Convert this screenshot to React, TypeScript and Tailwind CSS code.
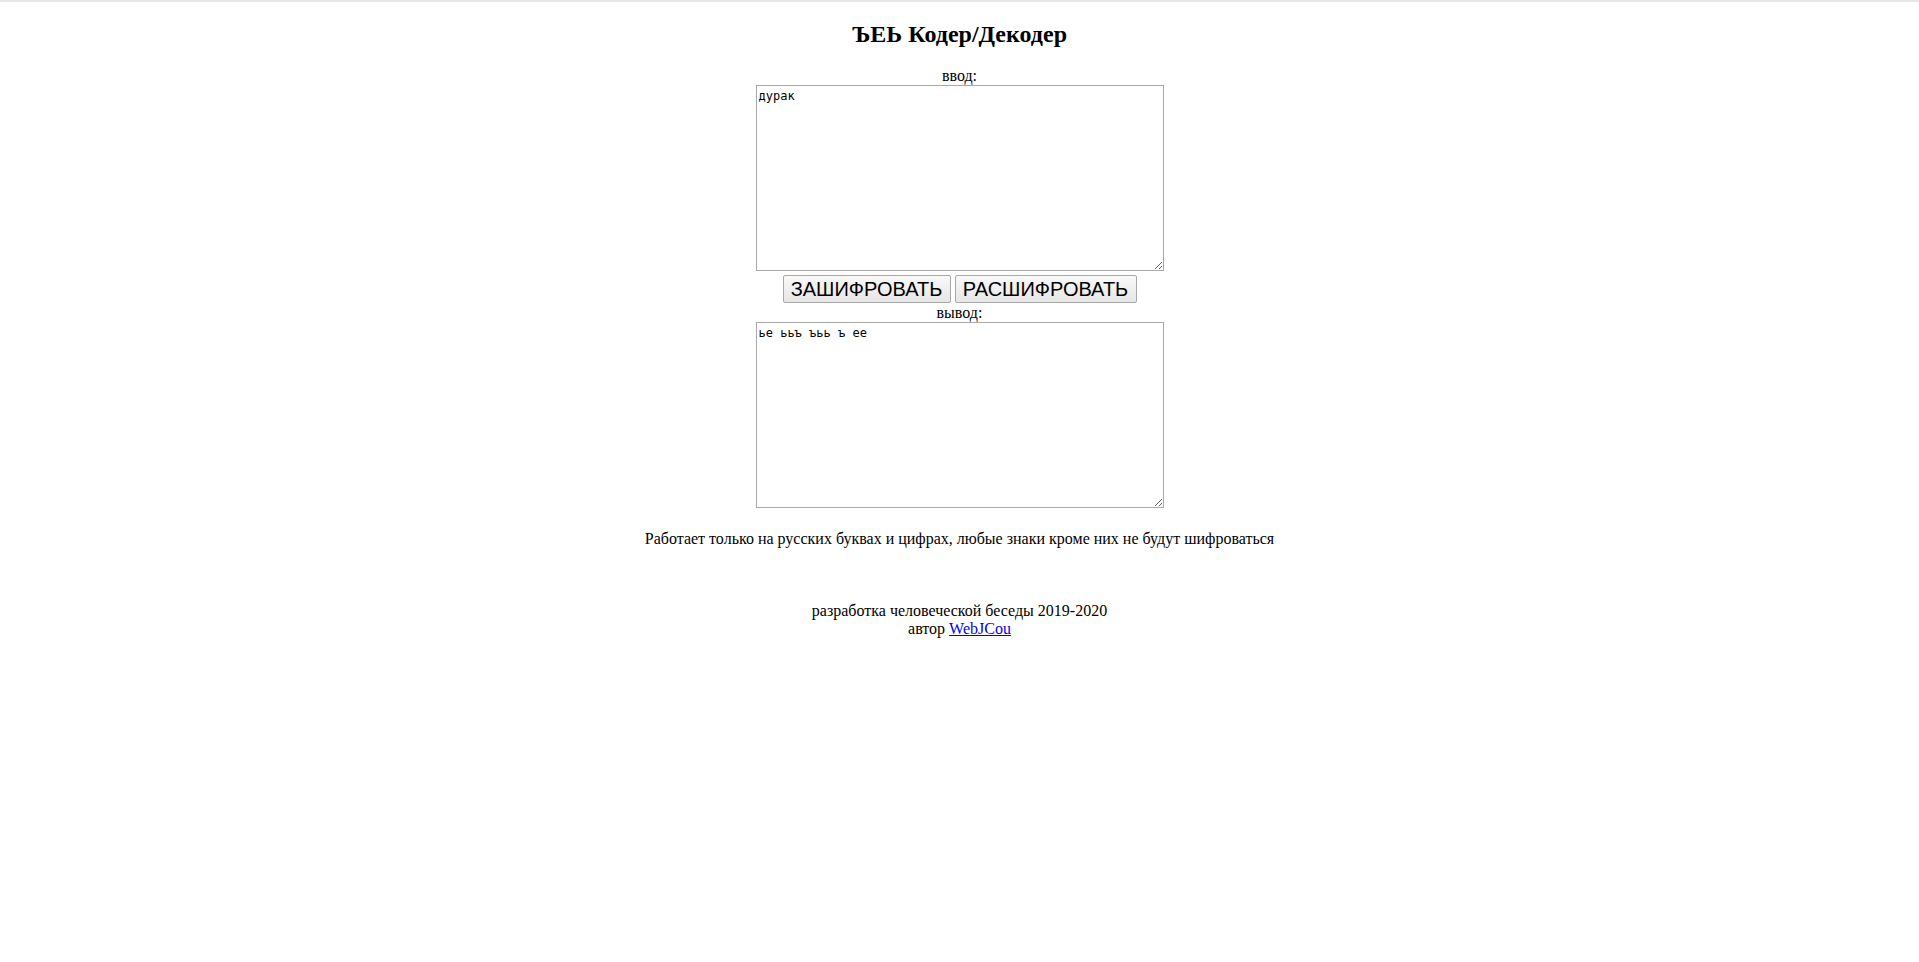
import React from "react";

export default function App() {
  const serif = { fontFamily: '"Liberation Serif", "Times New Roman", serif' };
  return (
    <div className="min-h-[962px] bg-white text-black" style={serif}>
      <div className="h-[2px] bg-[#e6e6e6]" />
      <div className="flex flex-col items-center text-center">
        <h2 className="mt-[18px] text-[24px] font-bold leading-[28px]">ЪЕЬ Кодер/Декодер</h2>
        <div className="mt-[19px] text-[16px] leading-[18px]">ввод:</div>
        <textarea
          className="block h-[186px] w-[408px] resize border border-[#a9a9a9] bg-white px-[2px] pt-[3px] pb-[1px] text-[12px] leading-[15px] text-black outline-none"
          style={{ fontFamily: '"DejaVu Sans Mono", monospace' }}
          defaultValue="дурак"
        />
        <div className="mt-[4px] flex gap-[4px]">
          <button
            className="h-[28px] w-[168px] rounded-[2px] border border-[#a8a8a8] bg-gradient-to-b from-[#f9f9f9] to-[#e6e6e6] text-[20px] leading-[24px] text-black"
            style={{ fontFamily: '"Liberation Sans", Arial, sans-serif' }}
          >
            ЗАШИФРОВАТЬ
          </button>
          <button
            className="h-[28px] w-[182px] rounded-[2px] border border-[#a8a8a8] bg-gradient-to-b from-[#f9f9f9] to-[#e6e6e6] text-[20px] leading-[24px] text-black"
            style={{ fontFamily: '"Liberation Sans", Arial, sans-serif' }}
          >
            РАСШИФРОВАТЬ
          </button>
        </div>
        <div className="mt-[1px] text-[16px] leading-[18px]">вывод:</div>
        <textarea
          className="block h-[186px] w-[408px] resize border border-[#a9a9a9] bg-white px-[2px] pt-[3px] pb-[1px] text-[12px] leading-[15px] text-black outline-none"
          style={{ fontFamily: '"DejaVu Sans Mono", monospace' }}
          defaultValue="ье ььъ ъьь ъ ее"
        />
        <p className="mt-[22px] text-[16px] leading-[18px]">
          Работает только на русских буквах и цифрах, любые знаки кроме них не будут шифроваться
        </p>
        <div className="mt-[54px] text-[16px] leading-[18px]">разработка человеческой беседы 2019-2020</div>
        <div className="text-[16px] leading-[18px]">
          автор{" "}
          <a href="#" className="text-[#0000ee] underline">
            WebJCou
          </a>
        </div>
      </div>
    </div>
  );
}
